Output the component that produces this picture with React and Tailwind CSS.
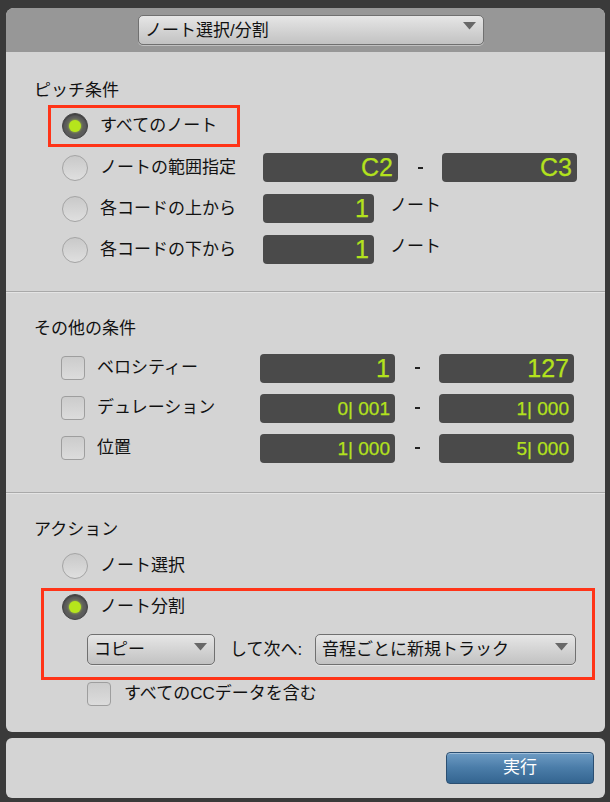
import React from 'react'

function Radio({ on }) {
  if (on) {
    return (
      <span className="flex h-[26px] w-[26px] shrink-0 items-center justify-center rounded-full border border-[#444] bg-[#5c5c5c] shadow-[inset_0_1px_2px_rgba(0,0,0,0.4)]">
        <span className="h-[12px] w-[12px] rounded-full bg-[#b6e51c] shadow-[0_0_3px_rgba(200,240,60,0.9)]" />
      </span>
    )
  }
  return <span className="h-[26px] w-[26px] shrink-0 rounded-full border border-[#a4a4a4] bg-gradient-to-b from-[#c9c9c9] to-[#dfdfdf]" />
}

function Check() {
  return <span className="h-[24px] w-[24px] shrink-0 rounded-[4px] border border-[#9e9e9e] bg-gradient-to-b from-[#cccccc] to-[#dcdcdc]" />
}

function Field({ value, className = 'w-[135px]', big }) {
  return (
    <div className={`flex h-[29px] shrink-0 items-center justify-end rounded-[4px] bg-[#4a4a4a] pr-[5px] leading-none text-[#b3e21d] [-webkit-text-stroke:0.25px_#b3e21d] ${big ? 'text-[25px]' : 'text-[19px]'} ${className}`}>
      {value}
    </div>
  )
}

function Select({ label, className, arrow = 'mb-[7px]' }) {
  return (
    <div className={`flex shrink-0 items-center justify-between rounded-[5px] border border-[#707070] bg-gradient-to-b from-[#e6e6e6] to-[#c2c2c2] pl-[6px] pr-[7px] text-[17px] leading-none text-[#111] shadow-[0_1px_0_rgba(255,255,255,0.4)] ${className}`}>
      <span>{label}</span>
      <svg width="13" height="8" viewBox="0 0 13 8" className={arrow}>
        <path d="M0 0h13L6.5 7.5z" fill="#686868" />
      </svg>
    </div>
  )
}

function Dash() {
  return (
    <span className="flex w-[44px] justify-center">
      <span className="h-[2px] w-[5px] bg-[#222]" />
    </span>
  )
}

function Range({ label, from, to, big }) {
  return (
    <div className="flex h-[40px] items-center">
      <Check />
      <span className="ml-[12px] w-[163px]">{label}</span>
      <Field value={from} big={big} />
      <Dash />
      <Field value={to} big={big} />
    </div>
  )
}

function Count({ label }) {
  return (
    <div className="flex h-[41px] items-center">
      <Radio />
      <span className="ml-[12px] w-[163px]">{label}</span>
      <Field value="1" big className="w-[111px]" />
      <span className="mb-[6px] ml-[16px]">ノート</span>
    </div>
  )
}

export default function App() {
  return (
    <div className="h-[802px] w-[610px] bg-[#3a3a3a] pt-[8px] font-['Liberation_Sans','Noto_Sans_CJK_JP',sans-serif] text-[17px] leading-[20px] text-[#111]">
      <div className="ml-[6px] w-[599px] overflow-hidden rounded-t-[8px] rounded-b-[6px] bg-[#d4d4d4]">
        <div className="flex h-[44px] bg-[#979797] pl-[132px] pt-[7px]">
          <Select label="ノート選択/分割" className="h-[30px] w-[346px]" arrow="mb-[9px]" />
        </div>

        {/* ピッチ条件 */}
        <div className="h-[240px] border-b border-[#a9a9a9] pt-[29px]">
          <div className="pl-[28px]">ピッチ条件</div>
          <div className="mt-[4px] pl-[42px]">
            <div className="flex h-[42px] w-[192px] items-center border-[3px] border-[#ff3418] pl-[11px]">
              <Radio on />
              <span className="ml-[12px]">すべてのノート</span>
            </div>
          </div>
          <div className="pl-[56px]">
            <div className="flex h-[41px] items-center">
              <Radio />
              <span className="ml-[12px] w-[163px]">ノートの範囲指定</span>
              <Field value="C2" big />
              <Dash />
              <Field value="C3" big />
            </div>
            <Count label="各コードの上から" />
            <Count label="各コードの下から" />
          </div>
        </div>

        {/* その他の条件 */}
        <div className="h-[201px] border-t border-b border-t-[#e4e4e4] border-b-[#a9a9a9] pt-[26px]">
          <div className="pl-[28px]">その他の条件</div>
          <div className="mt-[9px] pl-[55px]">
            <Range label="ベロシティー" from="1" to="127" big />
            <Range label="デュレーション" from="0| 001" to="1| 000" />
            <Range label="位置" from="1| 000" to="5| 000" />
          </div>
        </div>

        {/* アクション */}
        <div className="h-[239px] border-t border-[#e4e4e4] pt-[26px]">
          <div className="pl-[28px]">アクション</div>
          <div className="mt-[6px] flex h-[40px] items-center pl-[56px]">
            <Radio />
            <span className="ml-[12px]">ノート選択</span>
          </div>
          <div className="ml-[35px] mt-[2px] h-[92px] w-[554px] border-[3px] border-[#ff3418]">
            <div className="flex h-[32px] items-center pl-[18px]">
              <Radio on />
              <span className="ml-[12px]">ノート分割</span>
            </div>
            <div className="mt-[11px] flex h-[31px] items-center pl-[43px] pr-[16px]">
              <Select label="コピー" className="h-[31px] w-[128px]" arrow="mb-[6px]" />
              <span className="ml-[15px]">して次へ:</span>
              <Select label="音程ごとに新規トラック" className="ml-auto h-[31px] w-[261px]" arrow="mb-[6px]" />
            </div>
          </div>
          <div className="mt-[2px] flex h-[24px] items-center pl-[81px]">
            <Check />
            <span className="ml-[13px]">すべてのCCデータを含む</span>
          </div>
        </div>
      </div>

      <div className="ml-[6px] mt-[6px] flex h-[60px] w-[599px] justify-end rounded-[6px] bg-[#d4d4d4] pr-[11px] pt-[14px]">
        <button className="flex h-[32px] w-[148px] items-center justify-center rounded-[4px] border border-[#2b4f72] bg-gradient-to-b from-[#6e9cc4] via-[#4a7ca8] to-[#346590] text-[17px] text-white shadow-[inset_0_1px_0_rgba(255,255,255,0.35)]">
          実行
        </button>
      </div>
    </div>
  )
}
